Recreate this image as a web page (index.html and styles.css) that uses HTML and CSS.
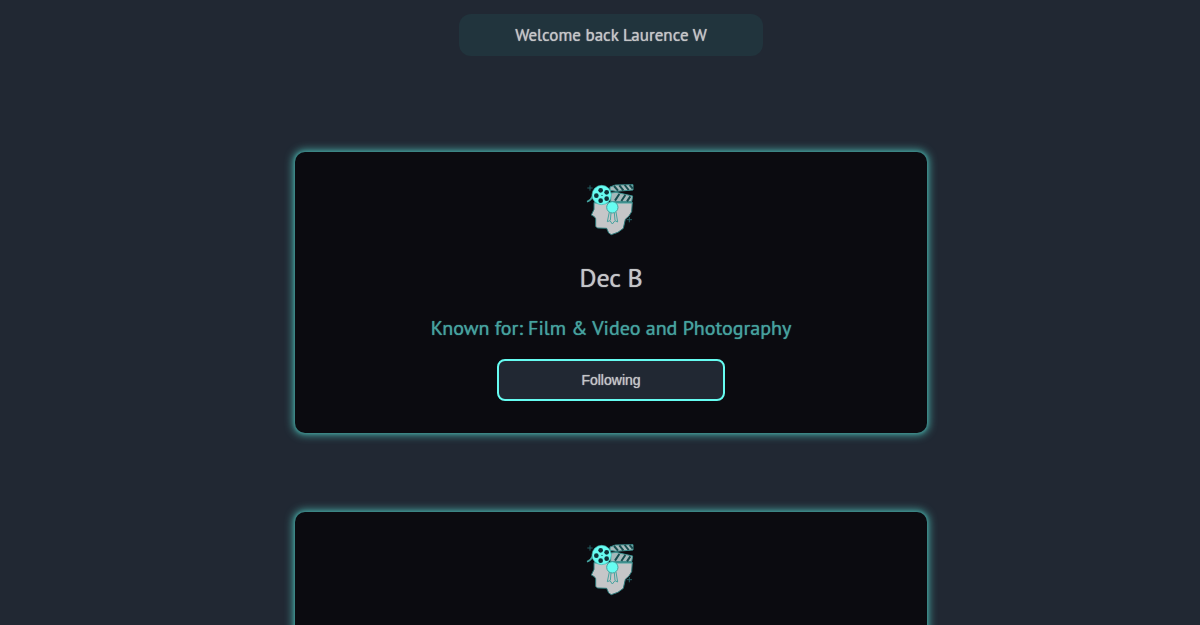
FILE: index.html
```html
<!DOCTYPE html>
<html lang="en">
<head>
<meta charset="utf-8">
<meta name="viewport" content="width=device-width, initial-scale=1">
<title>Creators</title>
<link rel="stylesheet" href="styles.css">
</head>
<body>
<svg class="sprite" aria-hidden="true">
  <symbol id="creator" viewBox="-1 0 192 198">
    <path class="head" d="M44 82H159L157 110Q151 124 138 133L132 160Q118 174 96 179L88 174L82 160L54 159L49 154L49 131L45 125L36 120L44 103Z"/>
    <path class="clap" d="M92 36L108 30L161 29V45L110 49L92 46Z"/>
    <path class="clap" d="M94 54L110 52L160 63L157 80H94Z"/>
    <path class="stripe" d="M104 33L116 47M120 31L132 46M136 30L148 45M151 30L160 41M107 77L120 57M126 78L138 60M143 79L153 64"/>
    <path class="seam" d="M45 84H159"/>
    <path class="tail" d="M41 62Q36 75 23 80"/>
    <circle class="reel" cx="67" cy="60" r="29"/>
    <g class="hole">
      <circle cx="64" cy="46" r="7"/><circle cx="82" cy="52" r="7"/><circle cx="82" cy="71" r="7"/><circle cx="64" cy="77" r="7"/><circle cx="51" cy="62" r="7"/><circle cx="68" cy="61" r="2"/>
    </g>
    <path class="ribbon" d="M90 111L84 140L92 137L99 147L107 137L115 141L110 111M95 114L93 136M105 114L107 136"/>
    <circle class="medal" cx="99" cy="97" r="17"/>
    <path class="spark" d="M32 31V47M24 39H40M150 126V142M142 134H158"/>
  </symbol>
</svg>
<main class="feed">
  <p class="welcome">Welcome back Laurence W</p>
  <article class="card">
    <svg class="logo" aria-hidden="true"><use href="#creator"/></svg>
    <h2 class="name">Dec B</h2>
    <p class="known">Known for: Film &amp; Video and Photography</p>
    <button class="follow" type="button">Following</button>
  </article>
  <article class="card">
    <svg class="logo" aria-hidden="true"><use href="#creator"/></svg>
  </article>
</main>
</body>
</html>
```
FILE: styles.css
```css
* { box-sizing: border-box; }
body {
  margin: 0;
  background: #212833;
  color: #c5c6c8;
  font-family: "PT Sans", "Noto Sans", sans-serif;
  text-shadow: 0 0 1px currentColor;
}
.sprite { position: absolute; width: 0; height: 0; }
.feed {
  display: flex;
  flex-direction: column;
  align-items: center;
  gap: 79px;
  padding: 14px 0 40px 22px;
}
.welcome {
  width: 304px;
  max-width: 100%;
  margin: 0 0 17px;
  padding: 9px 16px;
  border-radius: 12px;
  background: #21343d;
  font-size: 17px;
  line-height: 24px;
  text-align: center;
}
.card {
  display: flex;
  flex-direction: column;
  align-items: center;
  width: 632px;
  max-width: 100%;
  min-height: 281px;
  padding: 23px 16px 32px;
  border-radius: 10px;
  background: #0b0b10;
  box-shadow: 0 0 3px 1px #45a29e90, 0 0 8px 2px #45a29e;
}
.logo { width: 64px; height: 66px; }
.name {
  margin: 20px 0 0;
  font-size: 26px;
  font-weight: 500;
  line-height: 34px;
}
.known {
  margin: 19px 0 17px;
  color: #45a29e;
  font-size: 20px;
  line-height: 28px;
  text-align: center;
}
.follow {
  width: 228px;
  max-width: 100%;
  height: 42px;
  border: 2px solid #66fcf1;
  border-radius: 8px;
  background: #212833;
  color: #c5c6c8;
  font: 14px "Liberation Sans", sans-serif;
  text-shadow: inherit;
}
.head { fill: #c5c6c8; stroke: #2b7778; stroke-width: 3; }
.clap { fill: #a5b9bb; stroke: #398f8e; stroke-width: 3; }
.stripe { fill: none; stroke: #174e50; stroke-width: 6; }
.seam, .ribbon { fill: none; stroke: #45a29e; stroke-width: 3; }
.tail { fill: none; stroke: #45a29e; stroke-width: 5; }
.reel { fill: #66fcf1; stroke: #45b5b0; stroke-width: 2; }
.hole { fill: #103238; }
.medal { fill: #66fcf1; stroke: #45a29e; stroke-width: 3; }
.spark { fill: none; stroke: #246064; stroke-width: 3; }
```
